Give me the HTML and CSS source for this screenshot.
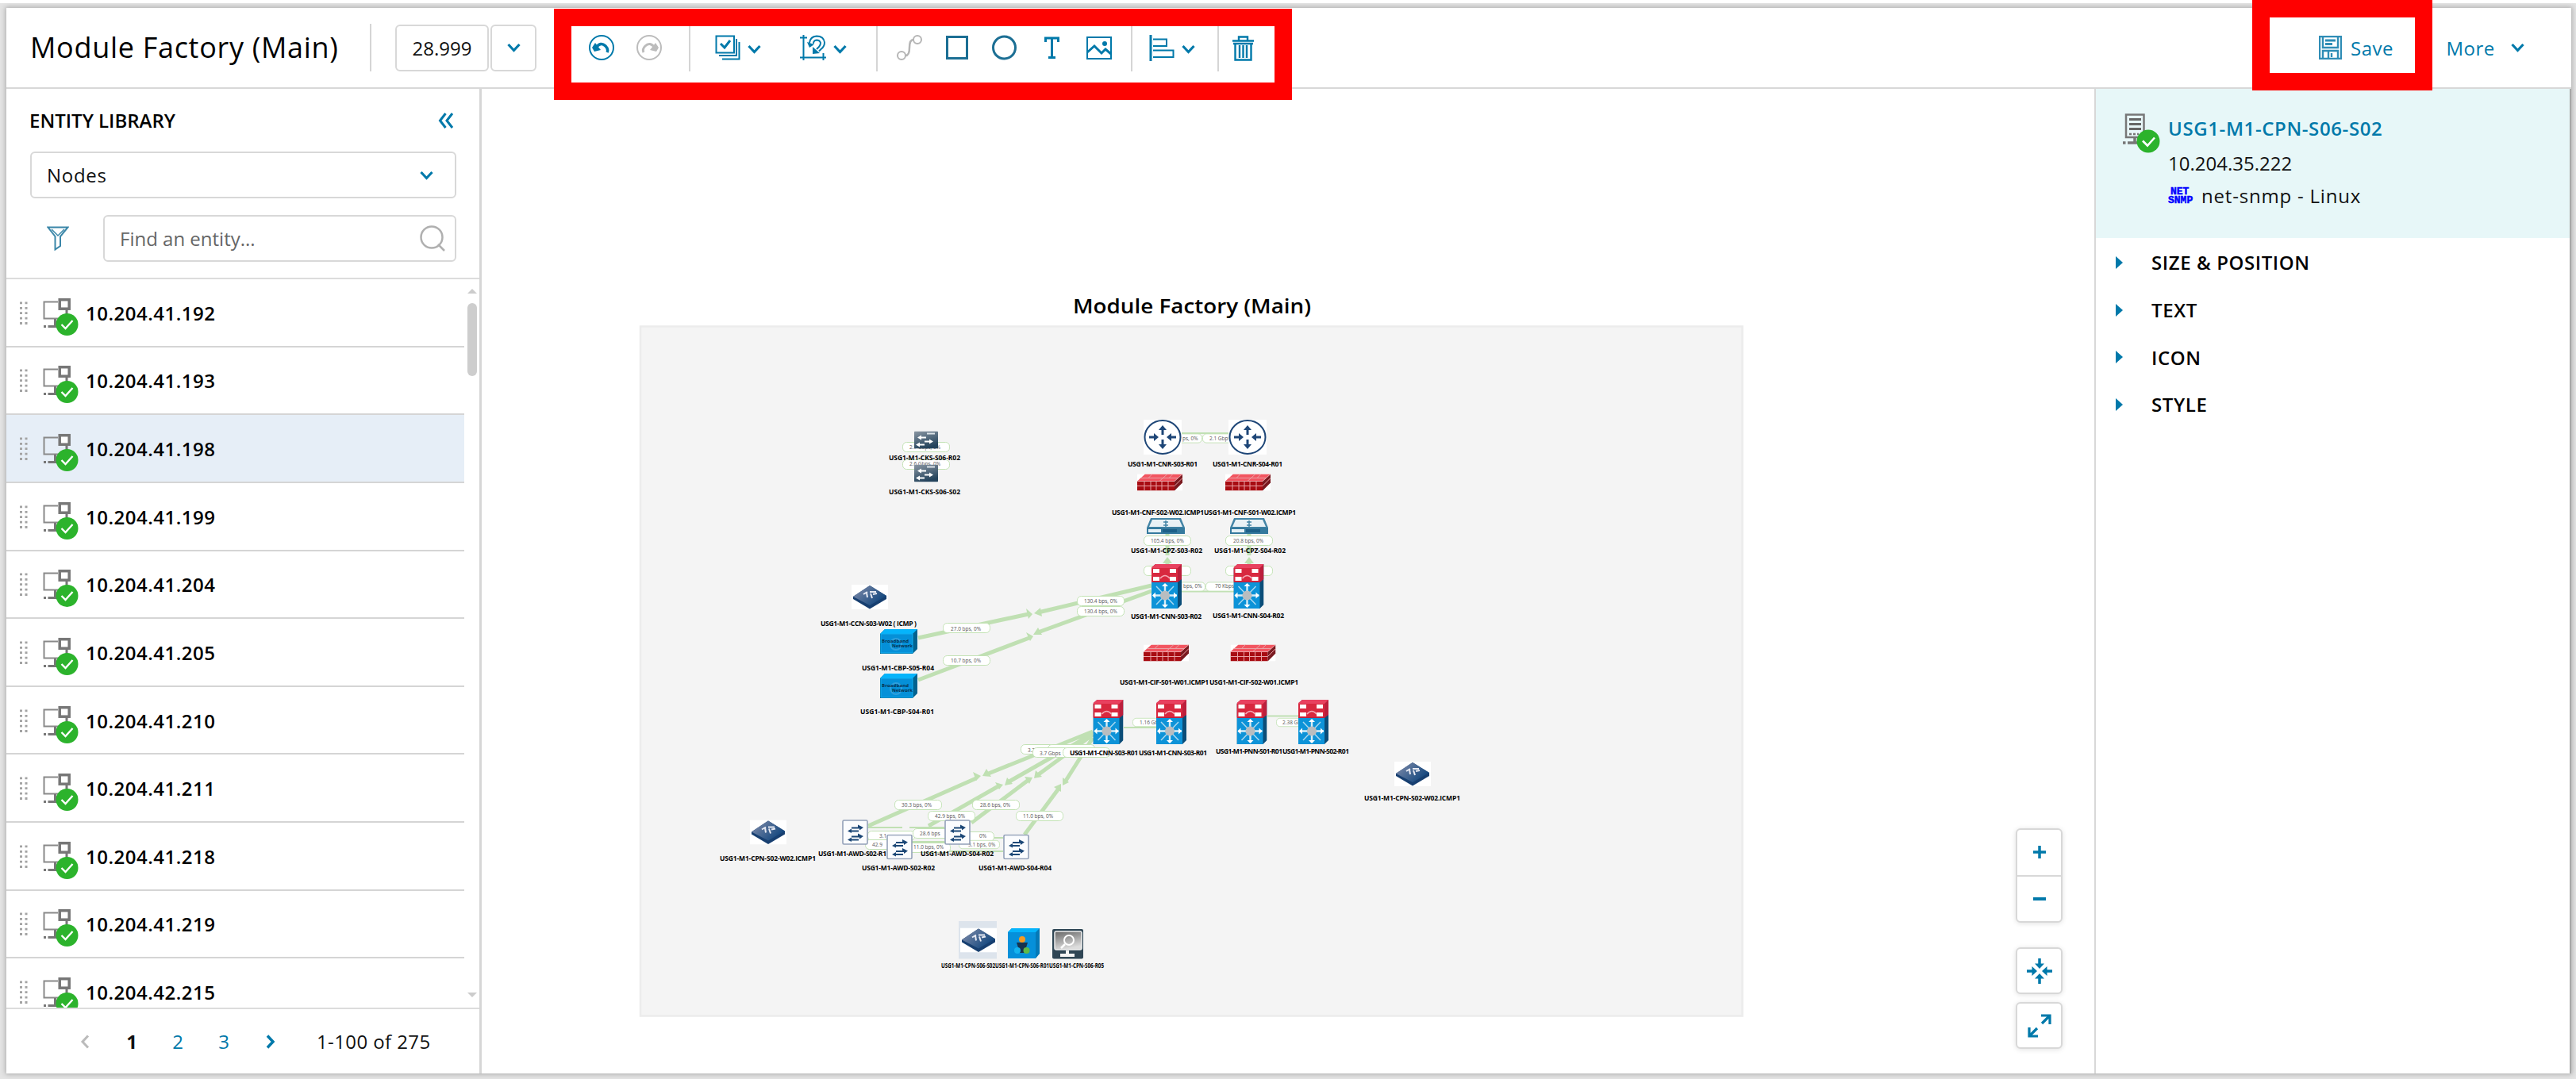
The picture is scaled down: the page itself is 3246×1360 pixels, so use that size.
FILE: index.html
```html
<!DOCTYPE html>
<html lang="en">
<head>
<meta charset="utf-8">
<title>Module Factory (Main)</title>
<link rel="stylesheet" href="styles.css">
</head>
<body>
<svg class="defs" width="0" height="0" aria-hidden="true">
  <defs>
    <linearGradient id="steel" x1="0" y1="0" x2="0.4" y2="1"><stop offset="0" stop-color="#8b97a3"/><stop offset="1" stop-color="#24435c"/></linearGradient>
    <linearGradient id="navy" x1="0" y1="0" x2="1" y2="0.6"><stop offset="0" stop-color="#8790ac"/><stop offset="1" stop-color="#10457d"/></linearGradient>
    <linearGradient id="screen" x1="0" y1="0" x2="0.3" y2="1"><stop offset="0" stop-color="#666"/><stop offset="1" stop-color="#ddd"/></linearGradient>
    <symbol id="chev" viewBox="0 0 17 12"><path d="M1.500 2l7 7.500 7-7.500" fill="none" stroke="#0079aa" stroke-width="3.200"/></symbol>
    <symbol id="node" viewBox="0 0 50 84">
      <path d="M20 28.500H2.500V49.500H25" fill="none" stroke="#8a8a8a" stroke-width="2"/>
      <path d="M16.500 50v9M31 38v6" fill="none" stroke="#777" stroke-width="3"/>
      <path d="M7.500 59.500H20M2 59.500H5" fill="none" stroke="#777" stroke-width="3"/>
      <rect x="22.200" y="25.700" width="12" height="11.500" fill="#fff" stroke="#777" stroke-width="3.500"/>
      <circle cx="31.500" cy="57" r="14" fill="#2cb32c"/>
      <path d="M24.500 57l5 5 9-10" fill="none" stroke="#fff" stroke-width="2.400"/>
    </symbol>
    <symbol id="grip" viewBox="0 0 12 32"><path d="M2.500 1.500v30M9 1.500v30" stroke="#a3a3a3" stroke-width="3" stroke-dasharray="2.800 3.600" fill="none"/></symbol>

    <symbol id="router" viewBox="0 0 48 44">
      <rect width="48" height="44" fill="#fff"/><ellipse cx="24" cy="22" rx="22.500" ry="21" fill="#fff" stroke="#1e4677" stroke-width="2"/>
      <g fill="#1e4677"><path d="M24 7l5 6h-3.500v6h-3v-6H19zM24 37l5-6h-3.500v-6h-3v6H19zM19 22l-6-5v3.500H7v3h6V27zM29 22l6-5v3.500h6v3h-6V27z"/></g>
    </symbol>
    <symbol id="firewall" viewBox="0 0 57 21">
      <rect width="57" height="21" fill="#fff"/><path d="M0 9L10 0H57L47 9z" fill="#f25560"/><path d="M0 9H47V21H0z" fill="#a80c12"/><path d="M47 9L57 0V11L47 21z" fill="#7a1a20"/>
      <path d="M0 9H47L57 0M0 15H47L57 5M9 9v12M17 9v12M24 9v12M31 9v12M39 9v12M4 5H51M14 5l5-5M28 9l10-9M40 5l5-5" stroke="#e9a0a4" stroke-width="1" fill="none"/>
    </symbol>
    <symbol id="balancer" viewBox="0 0 48 20">
      <path d="M5 0H43L48 12H0z" fill="#4384a5"/><path d="M7 2H41L45 11H3z" fill="#e9f1f5"/><path d="M0 12H48V20H0z" fill="#357a9e"/><path d="M2 14H18V18H2z" fill="#e4f0f6"/><path d="M20 14H38V18H20z" fill="#1d6088"/>
      <path d="M24 3v8M21 5h6M21 9h6" stroke="#4384a5" stroke-width="1.500"/>
    </symbol>
    <symbol id="core" viewBox="0 0 38 56">
      <path d="M0 5L5 0H38V51L33 56H0z" fill="#0b4d78"/><path d="M0 5L5 0H38V19L33 23H0z" fill="#bb1f3c"/><path d="M0 4L5 0H38L33 5H0z" fill="#e8415f"/><path d="M0 5H33V22H0z" fill="#d8283f"/>
      <path d="M2 6H10V11H2zM23 6H31V11H23zM2 16H10V21H2zM23 16H31V21H23z" fill="#fff"/><path d="M11 18q6-7 12 0" fill="none" stroke="#f4a8b4" stroke-width="1.500"/>
      <path d="M0 23H33V56H0z" fill="#0d93d8"/><path d="M17 25V54M2 39.500H32" stroke="#d5edf8" stroke-width="2.400"/><path d="M6 28L28 51M28 28L6 51" stroke="#a9d8f0" stroke-width="1.500"/>
      <path d="M17 24l4 4h-8zM17 55l4-4h-8zM1 39.500l4-4v8zM32 39.500l-4-4v8z" fill="#fff"/><circle cx="17" cy="39.500" r="6" fill="#b9bdc0"/>
    </symbol>
    <symbol id="dswitch" viewBox="0 0 30 22"><rect width="30" height="22" rx="1" fill="url(#steel)"/><path d="M16 3H26" stroke="#dce3e8" stroke-width="2"/><path d="M4 8l5-3v2h6v2H9v2zM24 13l-5-3v2h-6v2h6v2zM2 17l5-3v2h6v2H7v2z" fill="#fff"/></symbol>
    <symbol id="diamond" viewBox="0 0 46 31"><rect width="46" height="31" fill="#fff"/><path d="M23 1L44 14V18L23 30.500 2 18V15z" fill="#173f70"/><path d="M23 1L44 14 23 26 2 15z" fill="url(#navy)"/><path d="M15 12l5-3M20 16l-1-6M26 17l-2-6M23 9h8M27 12l5-1" stroke="#e6e9f2" stroke-width="2"/></symbol>
    <symbol id="bluebox" viewBox="0 0 47 31"><path d="M0 6L6 0H47V25L41 31H0z" fill="#02628f"/><path d="M0 6L6 0H47L41 6z" fill="#05b4fb"/><path d="M1 6H41V30H1z" fill="#0590d8" stroke="#10aef0"/><circle cx="20" cy="19" r="7" fill="none" stroke="#2f9fdd" stroke-width="2"/></symbol>
    <symbol id="wswitch" viewBox="0 0 33 32"><rect x="1" y="1" width="31" height="30" rx="1.500" fill="#fbfcfe" stroke="#93a0b8" stroke-width="1.600"/><path d="M12 9.500h8V6.500l7 3.500-5 3.500v-2H12zM21 13.500h-9v-2l-5 3 5 2.500v-1.500h9zM12 20.500h8v-3l7 3.500-5 3.500v-2H12zM21 24.500h-9v-2l-5 3 5 2.500v-1.500h9z" fill="#1d4877"/></symbol>
    <symbol id="pill" viewBox="0 0 60 13"><rect x="0.500" y="0.500" width="59" height="12" rx="5" fill="#fff" stroke="#c3e2b5"/></symbol>
  </defs>
</svg>

<div class="window">
  <header class="topbar">
    <h1 class="title">Module Factory (Main)</h1>
    <span class="sep"></span>
    <span class="zoom-value">28.999</span>
    <span class="zoom-open"><svg class="chev"><use href="#chev"/></svg></span>
    <nav class="tools">
      <svg width="32" height="32" viewBox="0 0 32 32" fill="none" stroke="#0079aa"><circle cx="16" cy="16" r="15" stroke-width="2"/><path d="M9 16q6-8 12-2 4 4 2 8" stroke-width="3.500"/><path d="M4 16l4-6 7 9-8 2z" fill="#0079aa" stroke="none"/></svg>
      <svg class="tool-redo" width="32" height="32" viewBox="0 0 32 32" fill="none" stroke="#bcbcbc"><circle cx="16" cy="16" r="15" stroke-width="2"/><path d="M23 16q-6-8-12-2-4 4-2 8" stroke-width="3"/><path d="M28 16l-4-6-7 9 8 2z" fill="#bcbcbc" stroke="none"/></svg>
      <span class="sep s1"></span>
      <svg width="32" height="32" viewBox="0 0 32 32" fill="none" stroke="#0079aa" stroke-width="2"><path d="M1.500 1.500H24V22.500H1.500zM27 5V26H5M30.500 9V30.500H9"/><path d="M7 11l5 5 7-9" stroke-width="3"/></svg>
      <svg class="chev c"><use href="#chev"/></svg>
      <svg class="tool-crop" width="33" height="32" viewBox="0 0 33 32" fill="none" stroke="#0079aa" stroke-width="2"><path d="M4.500 0V32M0 3.500H9M0 28.500H33M29.500 23V32"/><path d="M12 10q1-8 9-8.500 9 0 10 8 0 5-4 8l-3 3"/><path d="M17 11q0-4 4-4.500 4 0 5 3.500 0 3-2 5l-3 3"/><path d="M9 9l3 7 6-4zM16 15l9 8-9 1z" fill="#0079aa" stroke="none"/></svg>
      <svg class="chev c"><use href="#chev"/></svg>
      <span class="sep s2"></span>
      <svg width="32" height="32" viewBox="0 0 32 32" fill="none" stroke="#b5b5b5" stroke-width="2"><circle cx="26" cy="6" r="5"/><circle cx="6" cy="26" r="5"/><path d="M21 6q-5 0-5 10T11 26" stroke-width="2.500"/></svg>
      <svg class="tool-rect" width="28" height="30" viewBox="0 0 28 30"><rect x="1.500" y="1.500" width="25" height="27" fill="none" stroke="#1c6f94" stroke-width="3"/></svg>
      <svg class="tool-circle" width="31" height="32" viewBox="0 0 31 32"><circle cx="15.500" cy="16" r="14" fill="none" stroke="#1c6f94" stroke-width="3"/></svg>
      <svg class="tool-text" width="19" height="28" viewBox="0 0 19 28"><path d="M1.500 7V2H17.500V7M9.500 2V26M5 26.500H14" fill="none" stroke="#0079aa" stroke-width="3"/></svg>
      <svg class="tool-image" width="32" height="29" viewBox="0 0 32 29" fill="none" stroke="#0079aa" stroke-width="2"><rect x="1" y="1" width="30" height="27"/><path d="M1 20l9-8 9 9 5-5 7 6" stroke-width="3"/><circle cx="23" cy="9" r="3" fill="#0079aa" stroke="none"/></svg>
      <span class="sep s3"></span>
      <svg width="32" height="33" viewBox="0 0 32 33" fill="none" stroke="#0079aa" stroke-width="2"><path d="M2 0V33" stroke-width="3"/><path d="M5 5.500H22V14H5M5 19.500H30.500V28H5"/></svg>
      <svg class="chev c"><use href="#chev"/></svg>
      <span class="sep s4"></span>
      <svg width="27" height="33" viewBox="0 0 27 33" fill="none" stroke="#0079aa" stroke-width="2.400"><path d="M8 7V2.500H19V7M0 7.500H27M1 11H26M3.500 11V31.500H23.500V11M9 13V29M13.500 13V29M18 13V29"/></svg>
    </nav>
    <div class="actions">
      <span class="save"><svg width="29" height="30" viewBox="0 0 29 30" fill="none" stroke="#2f8db6" stroke-width="2.400"><path d="M1 1H28V29H1zM5 1V15H24V1M5 29V19H24V29M12 20V29M16 22V27"/><path d="M8 6H21M8 10.500H17" stroke-width="3"/></svg>Save</span>
      <span class="more">More</span><svg class="chev"><use href="#chev"/></svg>
    </div>
  </header>

  <div class="body">
    <aside class="library">
      <div class="lib-head"><span>ENTITY LIBRARY</span><svg width="20" height="20" viewBox="0 0 20 20"><path d="M9.500 1L2.500 10l7 9M18 1l-7 9 7 9" fill="none" stroke="#0079aa" stroke-width="3"/></svg></div>
      <div class="select"><span>Nodes</span><svg class="chev"><use href="#chev"/></svg></div>
      <div class="search-row">
        <svg class="filter" width="28" height="31" viewBox="0 0 28 31" fill="none" stroke="#3a86a8" stroke-width="2"><path d="M1.500 1.500H26.500L17 13V25L10.500 29.500V13z"/><path d="M6 4L14 12l8-8" stroke-width="1.500"/></svg>
        <div class="find"><span>Find an entity...</span><svg width="33" height="33" viewBox="0 0 33 33" fill="none" stroke="#b0b0b0" stroke-width="2.500"><circle cx="15" cy="15" r="13.500"/><path d="M23 24l8 8"/></svg></div>
      </div>
      <div class="list-wrap">
        <ul class="list">
          <li><svg class="grip"><use href="#grip"/></svg><svg class="node"><use href="#node"/></svg><span>10.204.41.192</span></li>
          <li><svg class="grip"><use href="#grip"/></svg><svg class="node"><use href="#node"/></svg><span>10.204.41.193</span></li>
          <li class="on"><svg class="grip"><use href="#grip"/></svg><svg class="node"><use href="#node"/></svg><span>10.204.41.198</span></li>
          <li><svg class="grip"><use href="#grip"/></svg><svg class="node"><use href="#node"/></svg><span>10.204.41.199</span></li>
          <li><svg class="grip"><use href="#grip"/></svg><svg class="node"><use href="#node"/></svg><span>10.204.41.204</span></li>
          <li><svg class="grip"><use href="#grip"/></svg><svg class="node"><use href="#node"/></svg><span>10.204.41.205</span></li>
          <li><svg class="grip"><use href="#grip"/></svg><svg class="node"><use href="#node"/></svg><span>10.204.41.210</span></li>
          <li><svg class="grip"><use href="#grip"/></svg><svg class="node"><use href="#node"/></svg><span>10.204.41.211</span></li>
          <li><svg class="grip"><use href="#grip"/></svg><svg class="node"><use href="#node"/></svg><span>10.204.41.218</span></li>
          <li><svg class="grip"><use href="#grip"/></svg><svg class="node"><use href="#node"/></svg><span>10.204.41.219</span></li>
          <li><svg class="grip"><use href="#grip"/></svg><svg class="node"><use href="#node"/></svg><span>10.204.42.215</span></li>
        </ul>
        <div class="scroll"><span class="up"></span><span class="thumb"></span><span class="down"></span></div>
      </div>
      <div class="pager">
        <svg width="12" height="18" viewBox="0 0 12 18"><path d="M10 1.500L3 9l7 7.500" fill="none" stroke="#bbb" stroke-width="3"/></svg>
        <b>1</b><a>2</a><a>3</a>
        <svg class="next" width="12" height="18" viewBox="0 0 12 18"><path d="M2 1.500L9 9l-7 7.500" fill="none" stroke="#0079aa" stroke-width="3.500"/></svg>
        <span class="range">1-100 of 275</span>
      </div>
    </aside>

    <main class="stage">
      <svg class="map" width="2032" height="1241" viewBox="607 112 2032 1241">
        <rect x="807" y="411.500" width="1388.500" height="869" fill="#f4f4f4" stroke="#ececec" stroke-width="2.500"/>
        <text class="map-title" x="1352" y="394.500" textLength="300" lengthAdjust="spacingAndGlyphs">Module Factory (Main)</text>

        <g class="links">
          <path d="M1488 546H1549M1489 745.500H1555M1416 917H1457M1597 902.500H1636" stroke-width="2"/>
          <path d="M1157 804L1296 774M1308 772L1451 738M1157 857L1297 804M1308 797L1451 745"/>
          <path d="M1377 922L1243 976M1230 981L1094 1041M1377 925L1270 986M1258 991L1170 1041M1377 926L1306 978M1296 983L1224 1037M1377 930L1343 984M1334 994L1291 1052"/>
          <path d="M1093 1043H1137M1146 1043H1190M1093 1061H1190M1149 1073H1264M1223 1056H1264" stroke-width="2"/>
          <path d="M1471 672V700M1471 706V712M1574 672V700M1574 706V712"/>
        </g>
        <g fill="#bfe0b2">
          <path d="M1301 774l-8-7 3 13zM1303 773l8-7 2 11zM1302 802l-9-5 5 11zM1302 800l6-9 5 9zM1236 978l-10-5 4 11zM1238 978l5-9 6 10zM1264 989l-10-3 5 9zM1266 990l3-10 7 8zM1301 980l-10-1 6 9zM1303 981l2-10 8 8zM1337 988l-9 4 9 6zM1339 990v-10l8 6z"/>
          <path d="M1465 710h12l-6-8zM1568 710h12l-6-8zM1466 691h10l-5 7zM1569 691h10l-5 7z"/>
        </g>

        <g class="pills">
          <use href="#pill" x="1459" y="546" width="56" height="13"/><text x="1490" y="555">ps, 0%</text>
          <use href="#pill" x="1515" y="546" width="56" height="13"/><text x="1524" y="555">2.1 Gbps</text>
          <use href="#pill" x="1441" y="675" width="60" height="13"/><text x="1450" y="684">105.4 bps, 0%</text>
          <use href="#pill" x="1544" y="675" width="60" height="13"/><text x="1554" y="684">20.8 bps, 0%</text>
          <use href="#pill" x="1441" y="713" width="60" height="13"/><use href="#pill" x="1544" y="713" width="60" height="13"/>
          <use href="#pill" x="1463" y="733" width="56" height="13"/><text x="1491" y="741">bps, 0%</text>
          <use href="#pill" x="1519" y="733" width="56" height="13"/><text x="1531" y="741">70 Kbps</text>
          <use href="#pill" x="1137" y="557" width="60" height="13"/><text x="1146" y="566">2.7 Gbps, 0%</text>
          <use href="#pill" x="1137" y="579" width="60" height="13"/><text x="1146" y="587">2.6 Gbps, 0%</text>
          <use href="#pill" x="1357" y="751" width="60" height="13"/><text x="1366" y="760">130.4 bps, 0%</text>
          <use href="#pill" x="1357" y="764" width="60" height="13"/><text x="1366" y="773">130.4 bps, 0%</text>
          <use href="#pill" x="1188" y="785" width="60" height="13"/><text x="1198" y="795">27.0 bps, 0%</text>
          <use href="#pill" x="1188" y="826" width="60" height="13"/><text x="1198" y="835">10.7 bps, 0%</text>
          <use href="#pill" x="1427" y="904" width="52" height="13"/><text x="1436" y="913">1.16 Gbps</text>
          <use href="#pill" x="1608" y="904" width="52" height="13"/><text x="1616" y="913">2.38 Gbps</text>
          <use href="#pill" x="1286" y="938" width="60" height="13"/><text x="1295" y="948">3.2</text>
          <use href="#pill" x="1320" y="938" width="60" height="13"/><text x="1329" y="948">2.1</text>
          <use href="#pill" x="1301" y="942" width="60" height="13"/><text x="1310" y="952">3.7 Gbps</text>
          <use href="#pill" x="1339" y="942" width="60" height="13"/>
          <use href="#pill" x="1127" y="1008" width="60" height="13"/><text x="1136" y="1017">30.3 bps, 0%</text>
          <use href="#pill" x="1225" y="1008" width="60" height="13"/><text x="1235" y="1017">28.6 bps, 0%</text>
          <use href="#pill" x="1169" y="1022" width="60" height="13"/><text x="1178" y="1031">42.9 bps, 0%</text>
          <use href="#pill" x="1280" y="1022" width="60" height="13"/><text x="1289" y="1031">11.0 bps, 0%</text>
          <use href="#pill" x="1093" y="1047" width="60" height="13"/><text x="1108" y="1056">3.1</text>
          <use href="#pill" x="1150" y="1044" width="60" height="13"/><text x="1159" y="1053">28.6 bps</text>
          <use href="#pill" x="1193" y="1048" width="60" height="13"/><text x="1234" y="1056">0%</text>
          <use href="#pill" x="1090" y="1058" width="60" height="13"/><text x="1099" y="1067">42.9</text>
          <use href="#pill" x="1138" y="1062" width="60" height="13"/><text x="1151" y="1070">11.0 bps, 0%</text>
          <use href="#pill" x="1208" y="1058" width="52" height="13"/><text x="1220" y="1067">3.1 bps, 0%</text>
        </g>

        <g class="icons">
          <use href="#router" x="1441" y="529" width="48" height="44"/><use href="#router" x="1548" y="529" width="48" height="44"/>
          <use href="#firewall" x="1433" y="597.500" width="57" height="21"/><use href="#firewall" x="1544" y="597.500" width="57" height="21"/>
          <use href="#balancer" x="1445" y="653" width="48" height="20"/><use href="#balancer" x="1550" y="653" width="48" height="20"/>
          <use href="#core" x="1451" y="711" width="38" height="56"/><use href="#core" x="1554.500" y="711" width="38" height="56"/>
          <use href="#firewall" x="1441" y="812.500" width="57" height="21"/><use href="#firewall" x="1550.500" y="812.500" width="57" height="21"/>
          <use href="#core" x="1377.500" y="882" width="38" height="56"/><use href="#core" x="1457" y="882" width="38" height="56"/>
          <use href="#core" x="1558.500" y="882" width="38" height="56"/><use href="#core" x="1636" y="882" width="38" height="56"/>
          <use href="#dswitch" x="1152" y="543.500" width="30" height="22"/><use href="#dswitch" x="1152" y="585.500" width="30" height="22"/>
          <use href="#diamond" x="1073" y="737" width="46" height="31"/><use href="#diamond" x="945" y="1033.500" width="46" height="31"/><use href="#diamond" x="1757" y="960" width="46" height="31"/>
          <use href="#bluebox" x="1109" y="793" width="47" height="31"/><use href="#bluebox" x="1109" y="849" width="47" height="31"/>
          <use href="#wswitch" x="1061" y="1033" width="33" height="32"/><use href="#wswitch" x="1190" y="1033" width="33" height="32"/>
          <use href="#wswitch" x="1117" y="1051.500" width="33" height="32"/><use href="#wswitch" x="1264" y="1051.500" width="33" height="32"/>
          <rect x="1208" y="1161" width="48" height="47.500" fill="#dde4ec"/><use href="#diamond" x="1210" y="1169.500" width="46" height="31"/>
          <path d="M1270 1175l5-5h35v32l-5 6h-35z" fill="#0479b8"/><path d="M1270 1175l5-5h35l-5 5z" fill="#05b4fb"/><path d="M1270 1175h35v33h-35z" fill="#0690da"/>
          <path d="M1281 1188h14l-4 13h-6z" fill="#17334e"/><circle cx="1288" cy="1184" r="4" fill="#f59a23"/><circle cx="1282" cy="1198" r="4" fill="#15b3ee"/><circle cx="1293.500" cy="1198" r="4" fill="#5fb946"/>
          <rect x="1326" y="1171" width="39" height="37.500" rx="2" fill="#2f4655"/><rect x="1329" y="1174" width="34" height="23" rx="2" fill="url(#screen)" stroke="#eee" stroke-width="1.500"/><path d="M1345 1198v6M1336 1204h18" stroke="#f4f4f4" stroke-width="4"/><circle cx="1347" cy="1185" r="6" fill="none" stroke="#fff" stroke-width="2"/><path d="M1342 1190l-5 5" stroke="#fff" stroke-width="2.500"/>
        </g>

        <g class="names">
          <text x="1421" y="588" textLength="88">USG1-M1-CNR-S03-R01</text><text x="1528" y="588" textLength="88">USG1-M1-CNR-S04-R01</text>
          <text x="1401" y="649" textLength="116">USG1-M1-CNF-S02-W02.ICMP1</text><text x="1517" y="649" textLength="116">USG1-M1-CNF-S01-W02.ICMP1</text>
          <text x="1425" y="697" textLength="90">USG1-M1-CPZ-S03-R02</text><text x="1530" y="697" textLength="90">USG1-M1-CPZ-S04-R02</text>
          <text x="1425" y="780" textLength="89">USG1-M1-CNN-S03-R02</text><text x="1528" y="779" textLength="90">USG1-M1-CNN-S04-R02</text>
          <text x="1120" y="580" textLength="90">USG1-M1-CKS-S06-R02</text><text x="1120" y="623" textLength="90">USG1-M1-CKS-S06-S02</text>
          <text x="1034" y="789" textLength="121">USG1-M1-CCN-S03-W02 ( ICMP )</text>
          <text x="1086" y="845" textLength="91">USG1-M1-CBP-S05-R04</text><text x="1084" y="900" textLength="93">USG1-M1-CBP-S04-R01</text>
          <text x="1411" y="863" textLength="112">USG1-M1-CIF-S01-W01.ICMP1</text><text x="1524" y="863" textLength="112">USG1-M1-CIF-S02-W01.ICMP1</text>
          <text x="1348" y="952" textLength="86">USG1-M1-CNN-S03-R01</text><text x="1435" y="952" textLength="86">USG1-M1-CNN-S03-R01</text>
          <text x="1532" y="950" textLength="84">USG1-M1-PNN-S01-R01</text><text x="1616" y="950" textLength="84">USG1-M1-PNN-S02-R01</text>
          <text x="907" y="1085" textLength="121">USG1-M1-CPN-S02-W02.ICMP1</text>
          <text x="1031" y="1079" textLength="86">USG1-M1-AWD-S02-R1</text><text x="1160" y="1079" textLength="92">USG1-M1-AWD-S04-R02</text>
          <text x="1086" y="1097" textLength="92">USG1-M1-AWD-S02-R02</text><text x="1233" y="1097" textLength="92">USG1-M1-AWD-S04-R04</text>
          <text x="1719" y="1009" textLength="121">USG1-M1-CPN-S02-W02.ICMP1</text>
          <text x="1186" y="1220" textLength="68" lengthAdjust="spacingAndGlyphs">USG1-M1-CPN-S06-S02</text><text x="1254" y="1220" textLength="68" lengthAdjust="spacingAndGlyphs">USG1-M1-CPN-S06-R01</text><text x="1322" y="1220" textLength="69" lengthAdjust="spacingAndGlyphs">USG1-M1-CPN-S06-R05</text>
          <text class="tiny" x="1111" y="810" textLength="34">Broadband</text><text class="tiny" x="1124" y="815.500" textLength="26">Network</text>
          <text class="tiny" x="1111" y="866" textLength="34">Broadband</text><text class="tiny" x="1124" y="871.500" textLength="26">Network</text>
        </g>
      </svg>
      <div class="controls">
        <div class="pair">
          <span><svg width="16" height="16" viewBox="0 0 16 16"><path d="M8 0V16M0 8H16" stroke="#0079aa" stroke-width="3.500"/></svg></span>
          <span><svg width="16" height="16" viewBox="0 0 16 16"><path d="M0 8H16" stroke="#0079aa" stroke-width="4"/></svg></span>
        </div>
        <span class="ctl fit"><svg width="32" height="32" viewBox="0 0 32 32"><path d="M16 0V9M16 23V32M0 16H9M23 16H32" stroke="#0079aa" stroke-width="3.500"/><path d="M10 6.500H22L16 13zM10 25.500H22L16 19zM6.500 10V22L13 16zM25.500 10V22L19 16z" fill="#0079aa"/></svg></span>
        <span class="ctl"><svg width="30" height="30" viewBox="0 0 30 30"><path d="M17 2H28V13M28 2L18 12M2 17V28H13M2 28L12 18" fill="none" stroke="#0079aa" stroke-width="3.200"/></svg></span>
      </div>
    </main>

    <aside class="props">
      <div class="entity">
        <svg width="48" height="56" viewBox="0 0 48 56"><path d="M4 1.500H26.500V30H4z" fill="#e8f7f9" stroke="#777" stroke-width="2.500"/><path d="M8 7.500H23M8 13.500H23M8 19.500H23" stroke="#666" stroke-width="3"/><path d="M8 26H20" stroke="#777" stroke-width="2.500" stroke-dasharray="3 2"/><path d="M0 37H3.500M6 37H20M15 30V37" stroke="#777" stroke-width="3.500"/><circle cx="32" cy="35" r="14.500" fill="#2cb32c"/><path d="M25 34.500l6 6 9-10" fill="none" stroke="#fff" stroke-width="2.600"/></svg>
        <div class="info">
          <b>USG1-M1-CPN-S06-S02</b>
          <span>10.204.35.222</span>
          <span class="vendor"><i class="snmp"><em>NET</em><em>SNMP</em></i>net-snmp - Linux</span>
        </div>
      </div>
      <ul class="sections">
        <li>SIZE &amp; POSITION</li><li>TEXT</li><li>ICON</li><li>STYLE</li>
      </ul>
    </aside>
  </div>
</div>
<div class="mark mark-tools"></div>
<div class="mark mark-save"></div>
</body>
</html>
```
FILE: styles.css
```css
* { box-sizing: border-box; }
html { background: linear-gradient(#fff 4px, #e4e4e4 4px); }
body { margin: 0; height: 1360px; overflow: hidden; padding: 10px 6px 7px 8px; position: relative; font: 24px/33px "Open Sans", "Noto Sans", sans-serif; color: #111; }
ul { list-style: none; margin: 0; padding: 0; }
svg { display: block; flex: none; }
.defs { position: absolute; }
.window { display: flex; flex-direction: column; height: 1343px; background: #fff; box-shadow: 0 0 6px 1px #aaa; }

.topbar { display: flex; align-items: center; height: 102px; flex: none; border-bottom: 2px solid #d8d8d8; padding: 0 59px 0 30px; }
.title { margin: 0; flex: 0 0 428px; font-size: 36px; font-weight: 500; line-height: 50px; letter-spacing: 0.7px; white-space: nowrap; color: #000; }
.sep { width: 2px; height: 60px; background: #d5d5d5; flex: none; }
.zoom-value, .zoom-open { display: flex; align-items: center; justify-content: center; height: 59px; border: 2px solid #d8d8d8; border-radius: 6px; }
.zoom-value { width: 118px; margin-left: 30px; }
.zoom-open { width: 58px; margin-left: 2px; }
.chev { width: 17px; height: 12px; }
.tools { display: flex; align-items: center; margin-left: 66px; }
.tool-redo { margin-left: 28px; }
.s1 { margin: 0 31px 0 34px; }
.c { margin-left: 9px; margin-top: 3px; }
.tool-crop { margin-left: 49px; }
.s2 { margin: 0 24px 0 37px; }
.tool-rect, .tool-circle { margin-left: 30px; }
.tool-text { margin-left: 35px; }
.tool-image { margin-left: 34px; }
.s3 { margin: 0 21px 0 24px; }
.s4 { margin: 0 17px 0 28px; }
.actions { display: flex; align-items: center; margin-left: auto; color: #0079aa; letter-spacing: 0.5px; }
.save { display: flex; align-items: center; gap: 11px; width: 160.500px; }
.more { width: 81.500px; }

.body { display: flex; flex: 1; min-height: 0; }
.library { width: 599px; flex: none; border-right: 3px solid #d6d6d6; display: flex; flex-direction: column; }
.lib-head { height: 79px; flex: none; display: flex; align-items: center; justify-content: space-between; padding: 0 32px 0 29px; font-weight: 600; color: #000; }
.select, .find { height: 59px; border: 2px solid #d8d8d8; border-radius: 6px; display: flex; align-items: center; justify-content: space-between; }
.select { margin: 0 29px 0 30px; padding: 0 27px 0 19px; flex: none; letter-spacing: 0.7px; }
.search-row { display: flex; align-items: center; padding: 21px 29px 20px 51px; }
.find { flex: 1; margin-left: 43px; padding: 0 11px 0 19px; color: #666; }
.list-wrap { display: flex; flex: 1; min-height: 0; border-top: 2px solid #dcdcdc; }
.list { width: 577px; overflow: hidden; }
.list li { display: flex; align-items: center; height: 85.64px; border-bottom: 2px solid #d5d5d5; font-weight: 600; color: #000; padding-left: 16px; }
.list .on { background: #e6eef7; }
.grip { width: 12px; height: 32px; margin-top: 2px; }
.node { width: 50px; height: 84px; margin-left: 17px; }
.list span { margin: 1px 0 0 5px; letter-spacing: 0.5px; }
.scroll { width: 19px; display: flex; flex-direction: column; align-items: center; padding: 12px 0 13px; }
.up, .down { border: 6px solid transparent; border-top: 0; border-bottom: 6px solid #ccc; }
.down { border-top: 6px solid #ccc; border-bottom: 0; margin-top: auto; }
.thumb { width: 12px; height: 92px; border-radius: 6px; background: #cdcdcd; margin-top: 12px; }
.pager { height: 83px; flex: none; border-top: 2px solid #dcdcdc; display: flex; align-items: center; padding-left: 93px; }
.pager b, .pager a { width: 14px; text-align: center; }
.pager b { margin-left: 46px; font-weight: 700; }
.pager a { margin-left: 44px; color: #0079aa; }
.next { margin-left: 46px; }
.range { margin-left: 52px; letter-spacing: 0.4px; }

.stage { flex: 1; min-width: 0; position: relative; }
.map-title { font-size: 26px; font-weight: 600; }
.links path { stroke: #c0e0b3; stroke-width: 5; fill: none; }
.links path[stroke-width="2"] { stroke-width: 2; }
.pills text { font-size: 6.500px; fill: #555; }
.names text { font-size: 8.500px; font-weight: 700; fill: #000; }
.names .tiny { font-size: 6px; fill: #06304f; }
.controls { position: absolute; right: 40px; bottom: 31px; width: 59px; display: flex; flex-direction: column; }
.pair, .ctl { border: 2px solid #d8d8d8; border-radius: 6px; background: #fff; box-shadow: 0 1px 6px rgba(0,0,0,.12); }
.pair { height: 119px; display: flex; flex-direction: column; }
.pair span { flex: 1; display: flex; align-items: center; justify-content: center; }
.pair span + span { border-top: 2px solid #d8d8d8; }
.ctl { height: 59px; display: flex; align-items: center; justify-content: center; }
.fit { margin: 31px 0 10px; }

.props { width: 601px; flex: none; border-left: 2px solid #d8d8d8; border-right: 2px solid #a8a8a8; }
.entity { height: 188px; background: #e7f7f8; display: flex; padding: 31px 0 0 34px; }
.info { display: flex; flex-direction: column; margin-left: 9px; padding-top: 2px; }
.info b { font-weight: 600; color: #0079aa; line-height: 33px; margin-bottom: 11px; letter-spacing: 0.6px; }
.vendor { display: flex; align-items: center; margin-top: 8px; gap: 11px; letter-spacing: 0.8px; }
.snmp { width: 31px; display: flex; flex-direction: column; font: 700 13px/11px "Liberation Mono", monospace; letter-spacing: 0; color: #00f; }
.snmp em { font-style: normal; -webkit-text-stroke: 0.5px #00f; }
.snmp em:first-child { padding-left: 3px; }
.sections { padding-top: 1px; }
.sections li { height: 59.7px; display: flex; align-items: center; font-weight: 600; color: #000; padding-left: 25px; letter-spacing: 0.6px; }
.sections li::before { content: ""; border: 8px solid transparent; border-left: 9px solid #0079aa; border-right: 0; margin-right: 36px; }

.mark { position: absolute; border: 22px solid #f00; pointer-events: none; }
.mark-tools { left: 698px; top: 11px; width: 930px; height: 115px; }
.mark-save { left: 2838px; top: 0; width: 227px; height: 114px; }
```
